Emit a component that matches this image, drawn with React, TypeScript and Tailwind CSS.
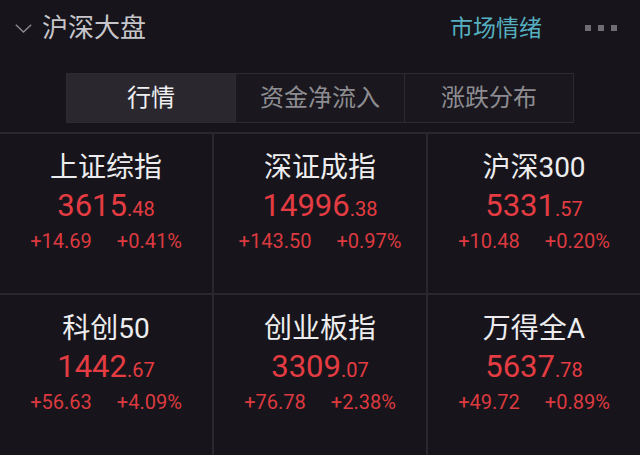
import React from 'react';

interface IndexItem {
  name: string;
  int: string;
  dec: string;
  change: string;
  pct: string;
}

const indices: IndexItem[] = [
  { name: '上证综指', int: '3615', dec: '.48', change: '+14.69', pct: '+0.41%' },
  { name: '深证成指', int: '14996', dec: '.38', change: '+143.50', pct: '+0.97%' },
  { name: '沪深300', int: '5331', dec: '.57', change: '+10.48', pct: '+0.20%' },
  { name: '科创50', int: '1442', dec: '.67', change: '+56.63', pct: '+4.09%' },
  { name: '创业板指', int: '3309', dec: '.07', change: '+76.78', pct: '+2.38%' },
  { name: '万得全A', int: '5637', dec: '.78', change: '+49.72', pct: '+0.89%' },
];

const tabs = ['行情', '资金净流入', '涨跌分布'];

function IndexCell({ item }: { item: IndexItem }) {
  return (
    <div className="bg-[#17151b] flex flex-col items-center pt-[16px]">
      <div className="text-[28px] leading-[36px] text-[#ededef]">{item.name}</div>
      <div className="mt-[2px] leading-[36px] text-[#e43c42]">
        <span className="text-[31px]">{item.int}</span>
        <span className="text-[20px]">{item.dec}</span>
      </div>
      <div className="flex gap-[25px] text-[20px] leading-[24px] text-[#dc3a40]">
        <span>{item.change}</span>
        <span>{item.pct}</span>
      </div>
    </div>
  );
}

export default function App() {
  return (
    <div
      className="w-[640px] h-[455px] bg-[#17151b] overflow-hidden flex flex-col"
      style={{ fontFamily: 'Roboto, "Noto Sans CJK SC", sans-serif' }}
    >
      {/* Header */}
      <div className="h-14 flex items-center pl-[15px] pr-[23px]">
        <svg width="17" height="9" viewBox="0 0 17 9" fill="none" className="shrink-0">
          <polyline points="0.8,0.8 8.5,8 16.2,0.8" stroke="#8b8a90" strokeWidth="1.4" />
        </svg>
        <span className="ml-[10px] text-[26px] text-[#c7c6cb] leading-none">沪深大盘</span>
        <span className="ml-auto text-[23px] text-[#56afc0] leading-none">市场情绪</span>
        <div className="ml-[43px] flex gap-[7px]">
          <span className="w-[6px] h-[6px] bg-[#6e6d73]" />
          <span className="w-[6px] h-[6px] bg-[#6e6d73]" />
          <span className="w-[6px] h-[6px] bg-[#6e6d73]" />
        </div>
      </div>

      {/* Tabs */}
      <div className="mt-[17px] mx-auto w-[508px] h-[50px] flex border border-[#2d2b31]">
        {tabs.map((t, i) => (
          <div
            key={t}
            className={
              i === 0
                ? 'flex-1 flex items-center justify-center bg-[#2a282e] text-[24px] text-[#efeff1]'
                : 'flex-1 flex items-center justify-center border-l border-[#2d2b31] bg-[#1a181e] text-[24px] text-[#8d8c91]'
            }
          >
            {t}
          </div>
        ))}
      </div>

      {/* Index grid */}
      <div className="mt-[9px] flex-1 grid grid-cols-3 grid-rows-[159px_1fr] gap-[2px] pt-[2px] bg-[#2a282e]">
        {indices.map((item) => (
          <IndexCell key={item.name} item={item} />
        ))}
      </div>
    </div>
  );
}
